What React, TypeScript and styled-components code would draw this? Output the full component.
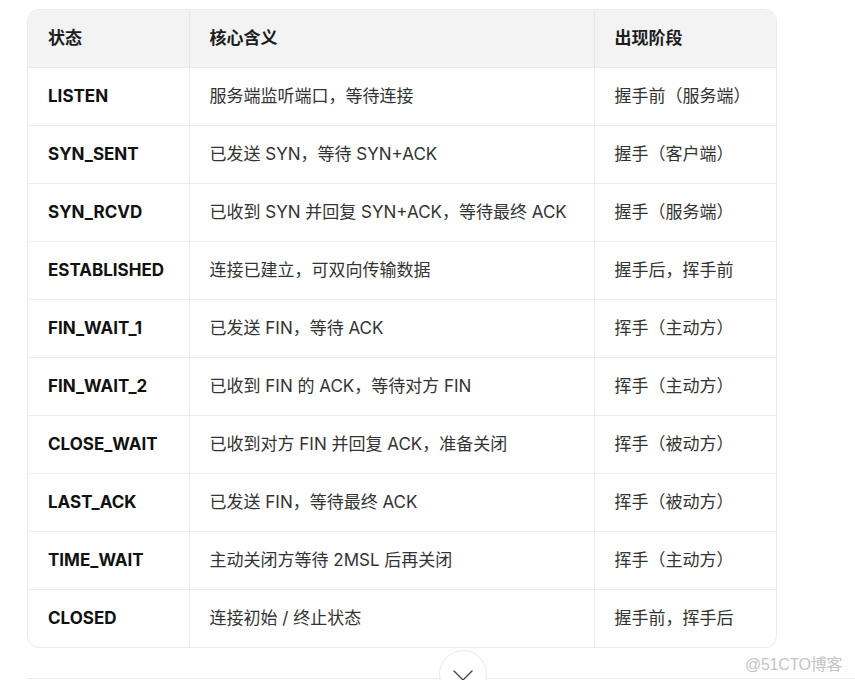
import React from 'react';
import styled, { createGlobalStyle } from 'styled-components';

const GlobalStyle = createGlobalStyle`
  html, body {
    margin: 0;
    padding: 0;
    background: #fff;
  }
  body {
    font-family: "Inter", "Noto Sans CJK SC", sans-serif;
    overflow: hidden;
  }
`;

const Page = styled.div`
  position: relative;
  height: 680px;
  padding: 9px 0 0 27px;
  box-sizing: border-box;
`;

const TableWrap = styled.div`
  width: 750px;
  border: 1px solid #ebebeb;
  border-radius: 12px;
  overflow: hidden;
  box-sizing: border-box;
`;

const Table = styled.table`
  width: 100%;
  border-collapse: collapse;
  table-layout: fixed;
`;

const HeadCell = styled.th<{ $w: number }>`
  width: ${(p) => p.$w}px;
  height: 57px;
  padding: 0 20px 4px;
  background: #f3f3f3;
  text-align: left;
  font-size: 17px;
  font-weight: 700;
  color: #1d1d1f;
  border-left: 1px solid #e6e6e6;
  box-sizing: border-box;
  &:first-child {
    border-left: none;
  }
`;

const Row = styled.tr`
  border-top: 1px solid #ebebeb;
`;

// CJK text sits a little low in Inter's line box, so regular cells get a small lift
const Cell = styled.td<{ $bold?: boolean }>`
  height: 58px;
  padding: ${(p) => (p.$bold ? '0 20px' : '0 20px 3px')};
  font-size: 17px;
  font-weight: ${(p) => (p.$bold ? 700 : 400)};
  color: ${(p) => (p.$bold ? '#111' : '#333')};
  border-left: 1px solid #ebebeb;
  white-space: nowrap;
  box-sizing: border-box;
  &:first-child {
    border-left: none;
  }
`;

const Footer = styled.div`
  height: 31px;
  border-bottom: 1px solid #ececec;
  padding-left: 412px;
  display: flex;
  align-items: flex-start;
  padding-top: 2px;
  box-sizing: border-box;
`;

const ExpandButton = styled.div`
  width: 48px;
  height: 48px;
  flex: none;
  border: 1px solid #ebebeb;
  border-radius: 50%;
  background: #fff;
  box-sizing: border-box;
  display: flex;
  justify-content: center;
  padding-top: 19px;
`;

const Watermark = styled.div`
  position: absolute;
  left: 745px;
  top: 651px;
  font-family: "Liberation Sans", "Noto Sans CJK SC", sans-serif;
  font-size: 16px;
  letter-spacing: -0.3px;
  color: #c4c4c4;
`;

const rows: [string, string, string][] = [
  ['LISTEN', '服务端监听端口，等待连接', '握手前（服务端）'],
  ['SYN_SENT', '已发送 SYN，等待 SYN+ACK', '握手（客户端）'],
  ['SYN_RCVD', '已收到 SYN 并回复 SYN+ACK，等待最终 ACK', '握手（服务端）'],
  ['ESTABLISHED', '连接已建立，可双向传输数据', '握手后，挥手前'],
  ['FIN_WAIT_1', '已发送 FIN，等待 ACK', '挥手（主动方）'],
  ['FIN_WAIT_2', '已收到 FIN 的 ACK，等待对方 FIN', '挥手（主动方）'],
  ['CLOSE_WAIT', '已收到对方 FIN 并回复 ACK，准备关闭', '挥手（被动方）'],
  ['LAST_ACK', '已发送 FIN，等待最终 ACK', '挥手（被动方）'],
  ['TIME_WAIT', '主动关闭方等待 2MSL 后再关闭', '挥手（主动方）'],
  ['CLOSED', '连接初始 / 终止状态', '握手前，挥手后'],
];

export default function App() {
  return (
    <Page>
      <GlobalStyle />
      <TableWrap>
        <Table>
          <thead>
            <tr>
              <HeadCell $w={161}>状态</HeadCell>
              <HeadCell $w={405}>核心含义</HeadCell>
              <HeadCell $w={182}>出现阶段</HeadCell>
            </tr>
          </thead>
          <tbody>
            {rows.map(([state, meaning, stage]) => (
              <Row key={state}>
                <Cell $bold>{state}</Cell>
                <Cell>{meaning}</Cell>
                <Cell>{stage}</Cell>
              </Row>
            ))}
          </tbody>
        </Table>
      </TableWrap>
      <Footer>
        <ExpandButton>
          <svg width="20" height="11" viewBox="0 0 20 11" fill="none">
            <polyline points="1,1 10,10 19,1" stroke="#444" strokeWidth="1.4" strokeLinecap="round" strokeLinejoin="round" />
          </svg>
        </ExpandButton>
      </Footer>
      <Watermark>@51CTO博客</Watermark>
    </Page>
  );
}
